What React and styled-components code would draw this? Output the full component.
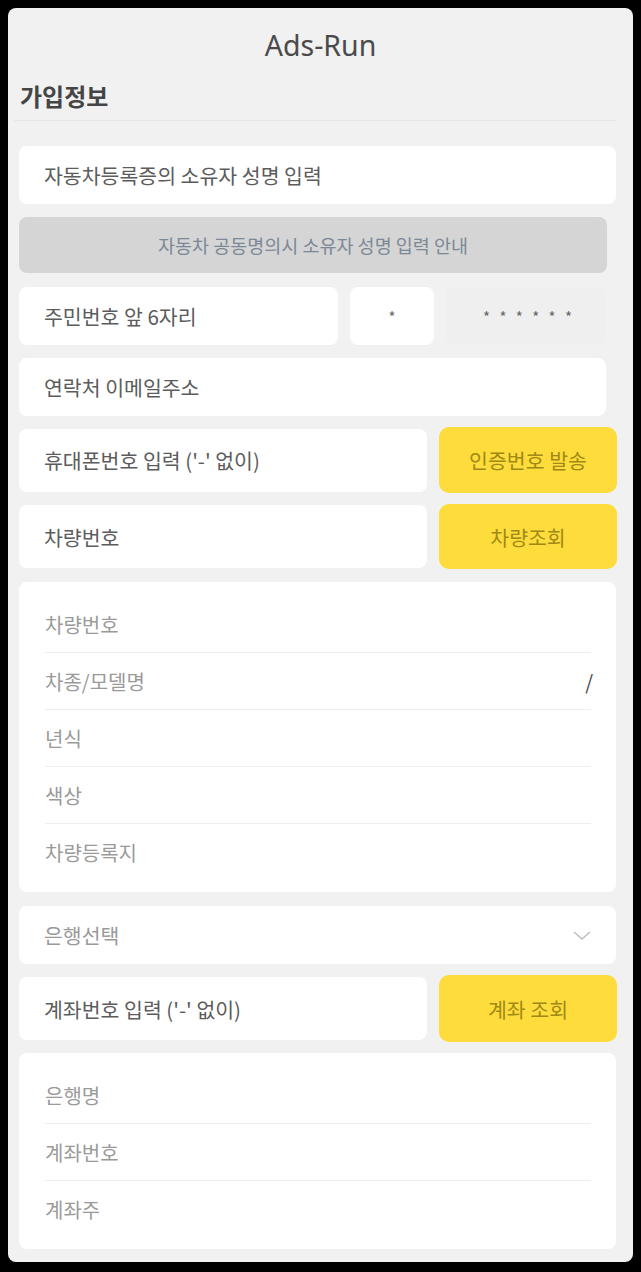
import React from "react";
import styled, { createGlobalStyle } from "styled-components";

const GlobalStyle = createGlobalStyle`
  html, body {
    margin: 0;
    padding: 0;
    background: #000;
  }
  body {
    font-family: "Noto Sans CJK KR", "Noto Sans", sans-serif;
  }
`;

const Screen = styled.div`
  margin: 8px;
  width: 625px;
  height: 1254px;
  background: #f1f1f1;
  border-radius: 8px;
  overflow: hidden;
`;

const Title = styled.h1`
  margin: 0;
  padding-top: 17px;
  height: 40px;
  text-align: center;
  font-family: "Noto Sans", sans-serif;
  font-size: 28.5px;
  font-weight: 400;
  line-height: 40px;
  color: #4a4a4a;
`;

const SectionHead = styled.h2`
  margin: 16px 17px 0 6px;
  padding: 0 0 9px 6px;
  font-size: 24px;
  font-weight: 700;
  line-height: 30px;
  color: #454545;
  border-bottom: 1px solid #e6e6e6;
`;

const Form = styled.div`
  display: flex;
  flex-direction: column;
  padding: 0 17px 0 11px;
`;

const Field = styled.div`
  margin-top: ${(p) => p.$mt ?? 13}px;
  margin-right: ${(p) => (p.$short ? 10 : 0)}px;
  height: ${(p) => p.$h ?? 58}px;
  display: flex;
  align-items: center;
  padding: 0 ${(p) => (p.$center ? 0 : 25)}px;
  justify-content: ${(p) => (p.$center ? "center" : "space-between")};
  flex: ${(p) => p.$flex ?? "none"};
  box-sizing: border-box;
  background: #fff;
  border-radius: 8px;
  font-size: 20.5px;
  color: ${(p) => (p.$muted ? "#9a9a9a" : "#5c5c5c")};
`;

const Notice = styled.div`
  margin-top: 13px;
  margin-right: 9px;
  height: 56px;
  display: flex;
  align-items: center;
  justify-content: center;
  background: #d5d5d5;
  border-radius: 8px;
  font-size: 18.5px;
  color: #7c8895;
`;

const Row = styled.div`
  margin-top: ${(p) => p.$mt ?? 13}px;
  margin-right: ${(p) => (p.$short ? 10 : -1)}px;
  display: flex;
  align-items: center;
  gap: ${(p) => p.$gap ?? 12}px;
`;

const Masked = styled.div`
  width: 160px;
  height: 58px;
  display: flex;
  align-items: center;
  justify-content: center;
  padding-left: 6px;
  box-sizing: border-box;
  background: #efefef;
  border-radius: 8px;
  font-size: 15px;
  letter-spacing: 3px;
  color: #666;
`;

const Star = styled.span`
  font-size: 15px;
  color: #666;
`;

const YellowButton = styled.button`
  width: 178px;
  height: ${(p) => p.$h ?? 66}px;
  border: none;
  border-radius: 10px;
  background: #fddc3b;
  font-family: inherit;
  font-size: 20.5px;
  color: #a08916;
  padding: 0;
`;

const InfoCard = styled.div`
  margin-top: ${(p) => p.$mt ?? 13}px;
  padding: 14px 25px 12px 26px;
  background: #fff;
  border-radius: 8px;
`;

const InfoRow = styled.div`
  height: 56px;
  display: flex;
  align-items: center;
  justify-content: space-between;
  font-size: 20px;
  color: #9a9a9a;
  & + & {
    border-top: 1px solid #eeeeee;
  }
`;

const Slash = styled.span`
  color: #444;
  font-size: 20px;
  margin-right: -2px;
`;

const Chevron = () => (
  <svg width="18" height="9" viewBox="0 0 18 9" fill="none">
    <polyline points="1,1 9,8 17,1" stroke="#bdbdbd" strokeWidth="1.4" />
  </svg>
);

const carInfo = ["차량번호", "차종/모델명", "년식", "색상", "차량등록지"];
const bankInfo = ["은행명", "계좌번호", "계좌주"];

export default function App() {
  return (
    <>
      <GlobalStyle />
      <Screen>
        <Title>Ads-Run</Title>
        <SectionHead>가입정보</SectionHead>
        <Form>
          <Field $mt={25}>자동차등록증의 소유자 성명 입력</Field>
          <Notice>자동차 공동명의시 소유자 성명 입력 안내</Notice>
          <Row $short $mt={14}>
            <Field $mt={0} $flex="1">주민번호 앞 6자리</Field>
            <Field $mt={0} $center style={{ width: 84 }}>
              <Star>*</Star>
            </Field>
            <Masked>* * * * * *</Masked>
          </Row>
          <Field $short>연락처 이메일주소</Field>
          <Row $mt={11}>
            <Field $mt={0} $h={63} $flex="1">휴대폰번호 입력 ('-' 없이)</Field>
            <YellowButton>인증번호 발송</YellowButton>
          </Row>
          <Row $mt={11}>
            <Field $mt={0} $h={63} $flex="1">차량번호</Field>
            <YellowButton $h={65}>차량조회</YellowButton>
          </Row>
          <InfoCard>
            {carInfo.map((label, i) => (
              <InfoRow key={label}>
                {label}
                {i === 1 && <Slash>/</Slash>}
              </InfoRow>
            ))}
          </InfoCard>
          <Field $mt={14} $muted>
            은행선택
            <Chevron />
          </Field>
          <Row $mt={11}>
            <Field $mt={0} $h={63} $flex="1">계좌번호 입력 ('-' 없이)</Field>
            <YellowButton $h={67}>계좌 조회</YellowButton>
          </Row>
          <InfoCard $mt={11}>
            {bankInfo.map((label) => (
              <InfoRow key={label}>{label}</InfoRow>
            ))}
          </InfoCard>
        </Form>
      </Screen>
    </>
  );
}
